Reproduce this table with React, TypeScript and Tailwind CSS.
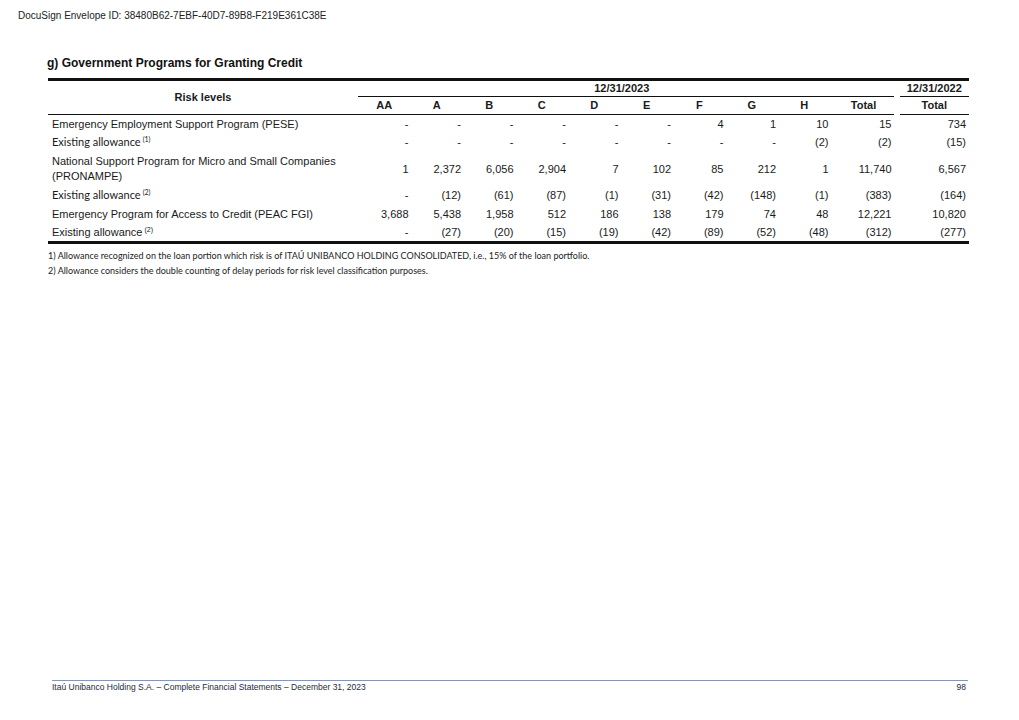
import React from 'react'

type Row = {
  label: React.ReactNode
  values: string[]
  h: string
}

const sans = "font-['Liberation_Sans',Arial,sans-serif]"
const calibri = "font-['Lato','Noto_Sans',sans-serif]"

function Sup({ n }: { n: number }) {
  return <sup className="text-[7px] -top-[4px] ml-[2px]">({n})</sup>
}

const rows: Row[] = [
  {
    label: <span>Emergency Employment Support Program (PESE)</span>,
    values: ['-', '-', '-', '-', '-', '-', '4', '1', '10', '15', '734'],
    h: 'h-[18px]',
  },
  {
    label: (
      <span className={calibri}>
        Existing allowance
        <Sup n={1} />
      </span>
    ),
    values: ['-', '-', '-', '-', '-', '-', '-', '-', '(2)', '(2)', '(15)'],
    h: 'h-[19px]',
  },
  {
    label: (
      <span className="leading-[15px] block">
        National Support Program for Micro and Small Companies
        <br />
        (PRONAMPE)
      </span>
    ),
    values: ['1', '2,372', '6,056', '2,904', '7', '102', '85', '212', '1', '11,740', '6,567'],
    h: 'h-[34px]',
  },
  {
    label: (
      <span className={calibri}>
        Existing allowance
        <Sup n={2} />
      </span>
    ),
    values: ['-', '(12)', '(61)', '(87)', '(1)', '(31)', '(42)', '(148)', '(1)', '(383)', '(164)'],
    h: 'h-[19px]',
  },
  {
    label: <span>Emergency Program for Access to Credit (PEAC FGI)</span>,
    values: ['3,688', '5,438', '1,958', '512', '186', '138', '179', '74', '48', '12,221', '10,820'],
    h: 'h-[18px]',
  },
  {
    label: (
      <span>
        Existing allowance
        <Sup n={2} />
      </span>
    ),
    values: ['-', '(27)', '(20)', '(15)', '(19)', '(42)', '(89)', '(52)', '(48)', '(312)', '(277)'],
    h: 'h-[18px]',
  },
]

const levels = ['AA', 'A', 'B', 'C', 'D', 'E', 'F', 'G', 'H']

function CreditTable() {
  return (
    <div
      className={`ml-[48px] w-[921px] border-t-[3px] border-b-[3px] border-[#111] grid grid-cols-[310px_repeat(9,52.5px)_63px_6px_69.5px] text-[11px] text-[#1a1a1a] ${sans}`}
    >
      {/* header */}
      <div className="row-span-2 flex items-center justify-center font-bold border-b border-[#111] h-[34px]">
        Risk levels
      </div>
      <div className="col-span-10 h-[16px] border-b border-[#111] flex items-center justify-center font-bold pr-[8px]">
        12/31/2023
      </div>
      <div />
      <div className="h-[16px] border-b border-[#111] flex items-center justify-center font-bold">
        12/31/2022
      </div>
      {levels.map((l) => (
        <div key={l} className="h-[18px] border-b border-[#111] flex items-center justify-center font-bold">
          {l}
        </div>
      ))}
      <div className="h-[18px] border-b border-[#111] flex items-center justify-center font-bold pl-[3px]">
        Total
      </div>
      <div />
      <div className="h-[18px] border-b border-[#111] flex items-center justify-center font-bold">
        Total
      </div>

      {/* body */}
      {rows.map((r, i) => (
        <React.Fragment key={i}>
          <div className={`${r.h} flex items-center pl-[4px]`}>{r.label}</div>
          {r.values.map((v, j) => (
            <React.Fragment key={j}>
              {j === 10 && <div />}
              <div className={`${r.h} flex items-center justify-end pr-[2px] ${j === 10 ? 'pr-[3px]' : ''}`}>
                {v}
              </div>
            </React.Fragment>
          ))}
        </React.Fragment>
      ))}
    </div>
  )
}

export default function App() {
  return (
    <div className="w-[1019px] h-[720px] bg-white flex flex-col">
      <div className={`pl-[18px] pt-[10px] text-[10px] leading-[12px] text-[#222] ${sans}`}>
        DocuSign Envelope ID: 38480B62-7EBF-40D7-89B8-F219E361C38E
      </div>

      <h2 className={`ml-[47px] mt-[34px] mb-[8px] text-[12px] leading-[14px] font-bold text-[#111] ${sans}`}>
        g) Government Programs for Granting Credit
      </h2>

      <CreditTable />

      <div className={`ml-[48px] mt-[4px] text-[9px] leading-[15px] text-[#222] ${calibri}`}>
        <p>
          1) Allowance recognized on the loan portion which risk is of ITAÚ UNIBANCO HOLDING CONSOLIDATED, i.e., 15% of
          the loan portfolio.
        </p>
        <p>2) Allowance considers the double counting of delay periods for risk level classification purposes.</p>
      </div>

      <div className="mt-auto mb-[27px] ml-[52px] w-[916px]">
        <div className="border-t border-[#8796b0]" />
        <div className={`flex justify-between text-[8.5px] leading-[12px] mt-[0px] text-[#1e2a40] ${sans}`}>
          <span>Itaú Unibanco Holding S.A. – Complete Financial Statements – December 31, 2023</span>
          <span className="pr-[2px]">98</span>
        </div>
      </div>
    </div>
  )
}
